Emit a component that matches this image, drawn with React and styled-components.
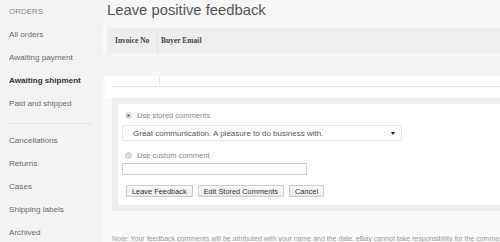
import React from 'react';
import styled, { createGlobalStyle } from 'styled-components';

const Global = createGlobalStyle`
	html, body {
		margin: 0;
		padding: 0;
		background: #fafafa;
		font-family: "Liberation Sans", Arial, sans-serif;
	}
	body {
		width: 500px;
		height: 242px;
		overflow: hidden;
	}
`;

const menu = [
	{ label: 'All orders' },
	{ label: 'Awaiting payment' },
	{ label: 'Awaiting shipment', active: true },
	{ label: 'Paid and shipped' },
];

const menu2 = ['Cancellations', 'Returns', 'Cases', 'Shipping labels', 'Archived'];

const Radio = ({ checked, label }) => (
	<S.RadioRow>
		<S.RadioDot $checked={checked} />
		<span>{label}</span>
	</S.RadioRow>
);

const App = () => {
	return (
		<S.Page>
			<Global />
			<S.Sidebar>
				<S.Heading>ORDERS</S.Heading>
				{menu.map(item => (
					<S.Item key={item.label} $active={item.active}>{item.label}</S.Item>
				))}
				<S.Divider />
				{menu2.map(item => <S.Item key={item}>{item}</S.Item>)}
			</S.Sidebar>
			<S.Main>
				<S.Title>Leave positive feedback</S.Title>
				<S.Table>
					<S.HeadRow>
						<S.HeadCell $w={51}>Invoice No</S.HeadCell>
						<S.HeadCell $last>Buyer Email</S.HeadCell>
					</S.HeadRow>
					<S.GrayRow />
					<S.WhiteRow>
						<S.Cell $w={47} />
						<S.Cell $last />
					</S.WhiteRow>
				</S.Table>
				<S.Panel>
					<S.Box>
						<Radio checked label="Use stored comments" />
						<S.Select>
							<span>Great communication. A pleasure to do business with.</span>
							<S.Caret />
						</S.Select>
						<Radio label="Use custom comment" />
						<S.Input />
						<S.Buttons>
							<S.Button>Leave Feedback</S.Button>
							<S.Button>Edit Stored Comments</S.Button>
							<S.Button>Cancel</S.Button>
						</S.Buttons>
					</S.Box>
				</S.Panel>
				<S.Note>Note: Your feedback comments will be attributed with your name and the date. eBay cannot take responsibility for the comments you leave.</S.Note>
			</S.Main>
		</S.Page>
	)
}

export default App
const S = {};
S.Page = styled.div`
	display: flex;
	width: 500px;
	height: 242px;
	overflow: hidden;
`;
S.Sidebar = styled.div`
	width: 103px;
	flex-shrink: 0;
	background: #f3f3f3;
	padding: 0 0 0 9px;
	box-sizing: border-box;
`;
S.Heading = styled.div`
	height: 23px;
	line-height: 23px;
	font-size: 8px;
	color: #8a8a8a;
`;
S.Item = styled.div`
	height: 23px;
	line-height: 23px;
	font-size: 8.1px;
	white-space: nowrap;
	color: ${p => p.$active ? '#333' : '#6a6a6a'};
	font-weight: ${p => p.$active ? 'bold' : 'normal'};
`;
S.Divider = styled.div`
	width: 83px;
	height: 1px;
	background: #e2e2e2;
	margin: 8px 0 5px;
`;
S.Main = styled.div`
	flex: 1;
	min-width: 0;
	display: flex;
	flex-direction: column;
	background: #fafafa;
	overflow: hidden;
`;
S.Title = styled.div`
	height: 32px;
	line-height: 20px;
	padding-left: 4px;
	font-size: 14.8px;
	color: #555;
	background: #f7f7f7;
	white-space: nowrap;
`;
S.Table = styled.div`
	display: flex;
	flex-direction: column;
`;
S.HeadRow = styled.div`
	display: flex;
	height: 25px;
	margin-left: 4px;
	background: #eeeeee;
`;
S.HeadCell = styled.div`
	width: ${p => p.$w ? p.$w + 'px' : 'auto'};
	flex: ${p => p.$last ? 1 : 'none'};
	padding-left: ${p => p.$last ? 3 : 8}px;
	line-height: 25px;
	font-family: "Liberation Serif", serif;
	font-weight: bold;
	font-size: 7.5px;
	color: #444;
	border-right: ${p => p.$last ? 'none' : '1px solid #e2e2e2'};
	box-sizing: border-box;
`;
S.GrayRow = styled.div`
	height: 23px;
	background: #f4f4f4;
`;
S.WhiteRow = styled.div`
	display: flex;
	height: 22px;
	background: #fff;
	margin-left: 2px;
`;
S.Cell = styled.div`
	width: ${p => p.$w ? p.$w + 'px' : 'auto'};
	flex: ${p => p.$last ? 1 : 'none'};
	height: 10px;
	margin-left: ${p => p.$last ? 0 : 7}px;
	border-bottom: 1px solid #e8e8e8;
	border-right: ${p => p.$last ? 'none' : '1px solid #ececec'};
`;
S.Panel = styled.div`
	margin-left: 9px;
	background: #efefef;
	padding: 6px 0 6px 6px;
`;
S.Box = styled.div`
	background: #fff;
	padding: 7px 0 8px 4px;
	display: flex;
	flex-direction: column;
	align-items: flex-start;
`;
S.RadioRow = styled.div`
	display: flex;
	align-items: center;
	gap: 5px;
	height: 9px;
	padding-left: 3px;
	font-size: 7.5px;
	color: #8a8a8a;
	white-space: nowrap;
`;
S.RadioDot = styled.span`
	width: 5px;
	height: 5px;
	border-radius: 50%;
	background: ${p => p.$checked ? '#fff' : '#ddd'};
	border: 1px solid #cfcfcf;
	box-shadow: ${p => p.$checked ? 'inset 0 0 0 1px #fff, inset 0 0 0 3px #777' : 'none'};
`;
S.Select = styled.div`
	display: flex;
	align-items: center;
	justify-content: space-between;
	width: 280px;
	height: 16px;
	box-sizing: border-box;
	margin: 5px 0 10px;
	padding: 0 6px 0 10px;
	border: 1px solid #e6e6e6;
	border-radius: 2px;
	font-size: 8px;
	color: #555;
	white-space: nowrap;
`;
S.Caret = styled.span`
	width: 0;
	height: 0;
	border-left: 2.5px solid transparent;
	border-right: 2.5px solid transparent;
	border-top: 3px solid #222;
`;
S.Input = styled.div`
	width: 185px;
	height: 12px;
	box-sizing: border-box;
	margin-top: 3px;
	border: 1px solid #cfcfcf;
	background: #fff;
`;
S.Buttons = styled.div`
	display: flex;
	gap: 5px;
	margin: 10px 0 0 4px;
`;
S.Button = styled.div`
	height: 12px;
	line-height: 11px;
	box-sizing: border-box;
	padding: 0 5px;
	font-size: 7.4px;
	color: #333;
	white-space: nowrap;
	background: linear-gradient(#fafafa, #ececec);
	border: 1px solid #cdcdcd;
	border-radius: 1px;
`;
S.Note = styled.div`
	margin: 24px 0 0 9px;
	font-size: 7px;
	color: #999;
	white-space: nowrap;
`;
